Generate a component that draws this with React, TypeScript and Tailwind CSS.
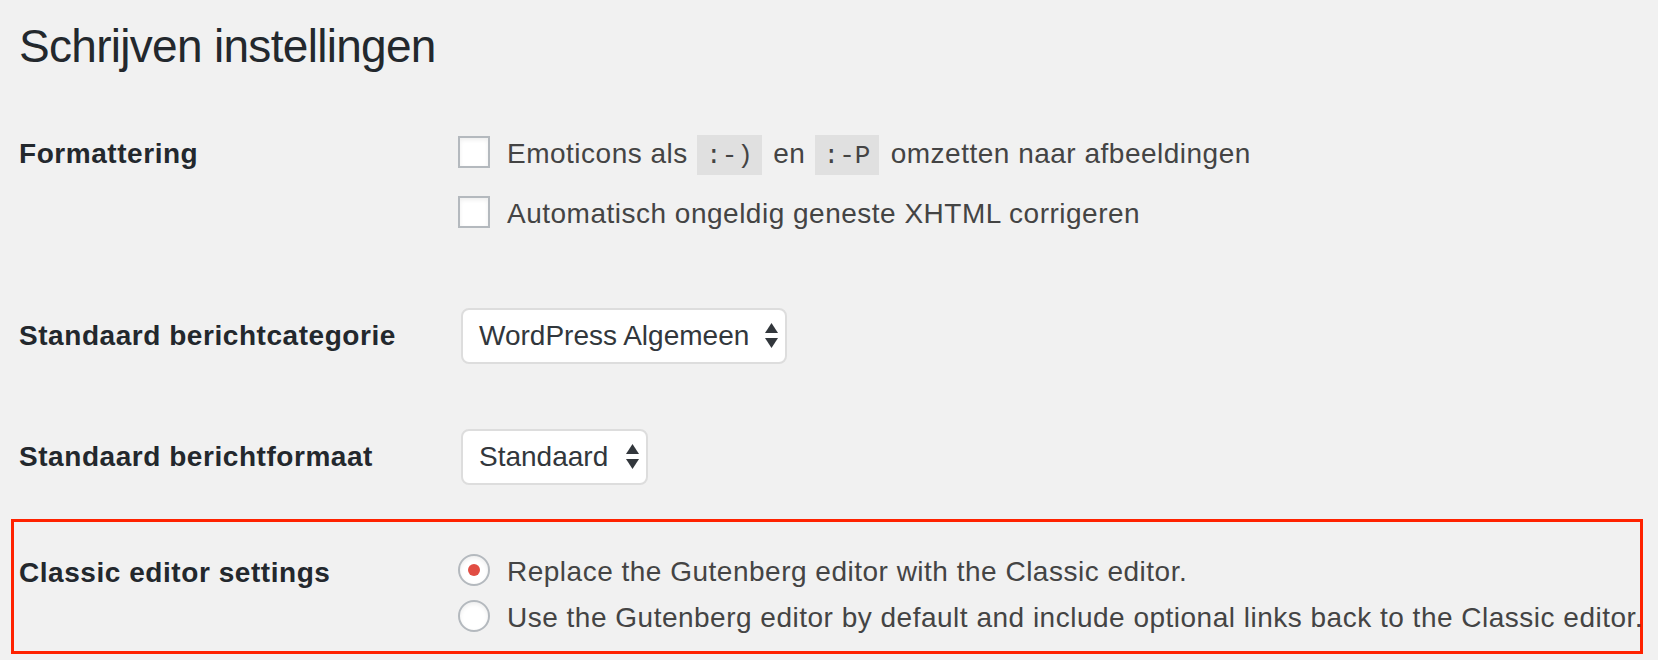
import { type ReactNode } from 'react'

const sans = "font-['Liberation_Sans',Arial,sans-serif]"

function Checkbox() {
  return <span className="block w-[32px] h-[32px] shrink-0 bg-white border-2 border-[#b4b9be] shadow-[inset_0_2px_4px_rgba(0,0,0,0.07)]" />
}

function Radio({ checked }: { checked?: boolean }) {
  return (
    <span className="flex items-center justify-center w-[32px] h-[32px] shrink-0 rounded-full bg-white border-2 border-[#b4b9be] shadow-[inset_0_2px_4px_rgba(0,0,0,0.07)]">
      {checked ? <span className="block w-[12px] h-[12px] rounded-full bg-[#e14d43]" /> : null}
    </span>
  )
}

function Code({ children }: { children: ReactNode }) {
  return (
    <code className="font-['Liberation_Mono',monospace] text-[26px] bg-black/[0.07] px-[9px] pt-[6px] pb-[4px] ml-[1px] mr-[3px] text-[#444] tracking-normal">
      {children}
    </code>
  )
}

function Arrows() {
  return (
    <svg width="13" height="26" viewBox="0 0 13 26" className="shrink-0">
      <path d="M6.5 0 L13 10 L0 10 Z" fill="#32373c" />
      <path d="M0 15 L13 15 L6.5 25 Z" fill="#32373c" />
    </svg>
  )
}

function Select({ value, width }: { value: string; width: string }) {
  return (
    <div className={`ml-[3px] flex items-center justify-between h-[56px] ${width} bg-white border-2 border-[#dddddd] rounded-[8px] pl-[16px] pr-[7px] text-[28px] leading-[32px] text-[#32373c]`}>
      <span>{value}</span>
      <Arrows />
    </div>
  )
}

function Label({ children, className }: { children: ReactNode; className?: string }) {
  return (
    <div className={`w-[439px] shrink-0 text-[28px] leading-[32px] font-bold text-[#23282d] tracking-[0.55px] ${className ?? ''}`}>
      {children}
    </div>
  )
}

function OptionRow({ control, children }: { control: ReactNode; children: ReactNode }) {
  return (
    <div className="flex items-start h-[32px] gap-[17px]">
      {control}
      <span className="pt-[4px] text-[28px] leading-[28px] text-[#444] tracking-[0.5px] whitespace-nowrap">{children}</span>
    </div>
  )
}

export default function App() {
  return (
    <div className={`min-h-screen w-full bg-[#f1f1f1] ${sans} pl-[19px] pr-[15px]`}>
      <h1 className="pt-[23px] text-[46px] leading-[46px] font-normal text-[#23282d] tracking-[-0.7px]">
        Schrijven instellingen
      </h1>

      <div className="mt-[67px] flex items-start">
        <Label className="pt-[2px]">Formattering</Label>
        <div className="flex flex-col gap-[28px]">
          <OptionRow control={<Checkbox />}>
            Emoticons als <Code>:-)</Code> en <Code>:-P</Code> omzetten naar afbeeldingen
          </OptionRow>
          <OptionRow control={<Checkbox />}>Automatisch ongeldig geneste XHTML corrigeren</OptionRow>
        </div>
      </div>

      <div className="mt-[80px] flex items-center">
        <Label>Standaard berichtcategorie</Label>
        <Select value="WordPress Algemeen" width="w-[326px]" />
      </div>

      <div className="mt-[65px] flex items-center">
        <Label>Standaard berichtformaat</Label>
        <Select value="Standaard" width="w-[187px]" />
      </div>

      <div className="mt-[34px] -ml-[8px] border-[3px] border-[#ff2200] pl-[5px] pt-[32px] pb-[19px] flex items-start">
        <Label className="pt-[3px]">Classic editor settings</Label>
        <div className="flex flex-col gap-[14px]">
          <OptionRow control={<Radio checked />}>Replace the Gutenberg editor with the Classic editor.</OptionRow>
          <OptionRow control={<Radio />}>
            Use the Gutenberg editor by default and include optional links back to the Classic editor.
          </OptionRow>
        </div>
      </div>
    </div>
  )
}
